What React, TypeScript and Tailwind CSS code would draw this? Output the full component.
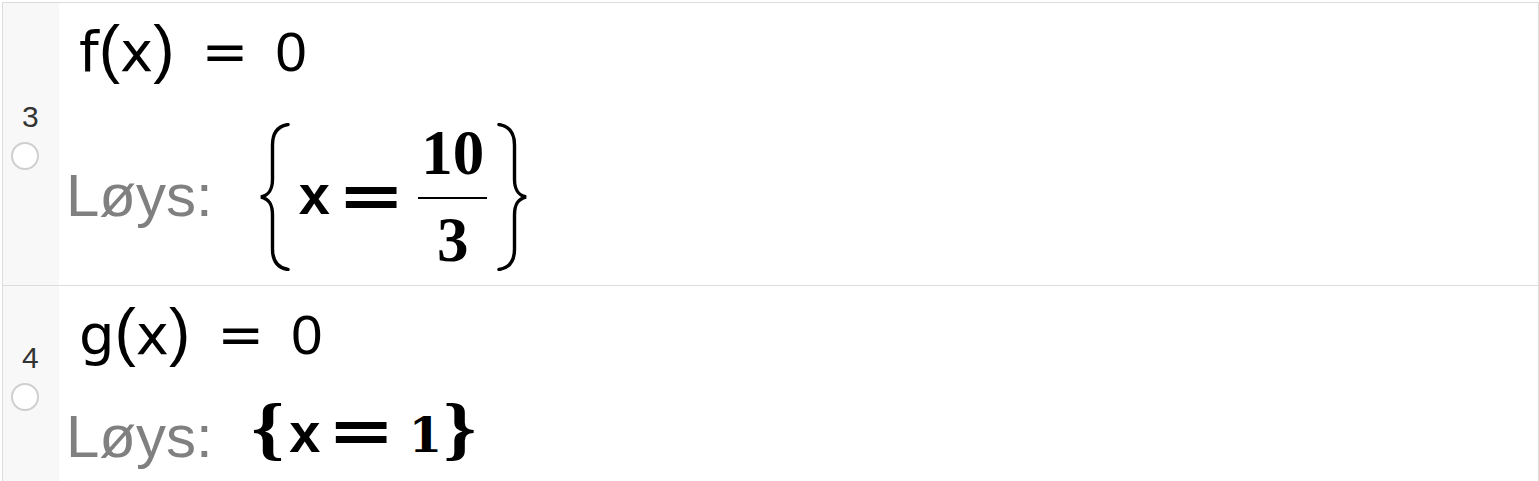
import React from 'react';

// stretched curly brace for the tall solution set
const TallBrace = ({ flip = false }: { flip?: boolean }) => (
  <svg width="34" height="148" viewBox="0 0 34 148" className={flip ? '-scale-x-100' : ''}>
    <path
      d="M30 1.5 C20 3 14.5 9 14.5 22 L14.5 56 C14.5 67 11 72 3 74 C11 76 14.5 81 14.5 92 L14.5 126 C14.5 139 20 145 30 146.5"
      fill="none"
      stroke="#000"
      strokeWidth="3.4"
      strokeLinecap="round"
    />
  </svg>
);

const Gutter = ({ num, pad }: { num: number; pad: string }) => (
  <div className={`w-[56px] shrink-0 bg-[#f8f8f8] flex flex-col ${pad}`}>
    <div className="pl-[19px] font-['Liberation_Sans',sans-serif] text-[30px] leading-[30px] text-[#333]">{num}</div>
    <div className="mt-[10px] ml-[8px] w-[28px] h-[28px] rounded-full border-2 border-[#cfcfcf] bg-white" />
  </div>
);

const Equation = ({ fn }: { fn: string }) => (
  <div className="pt-[14px] pl-[20px] h-[79px] flex items-baseline text-[56px] leading-[64px] text-black">
    <span className="font-['DejaVu_Sans',sans-serif]">{fn}</span>
    <span className="font-['Liberation_Sans',sans-serif] text-[64px]">(</span>
    <span className="font-['DejaVu_Sans',sans-serif]">x</span>
    <span className="font-['Liberation_Sans',sans-serif] text-[64px]">)</span>
    <span className="ml-[27px] font-['DejaVu_Sans',sans-serif]">=</span>
    <span className="ml-[27px] font-['Liberation_Sans',sans-serif]">0</span>
  </div>
);

const Losys = () => (
  <span className="font-['Liberation_Sans',sans-serif] text-[60px] leading-none text-[#808080]">Løys:</span>
);

const BoldX = () => (
  <span className="font-['Liberation_Sans',sans-serif] font-bold text-[56px] leading-none">x</span>
);

const BoldEq = () => (
  <span className="inline-block font-['DejaVu_Sans',sans-serif] font-bold text-[60px] leading-none scale-x-[1.35]">=</span>
);

export default function App() {
  return (
    <div className="w-[1539px] h-[481px] overflow-hidden bg-white pl-[2px] pt-[2px]">
      <div className="w-[1537px] border-t border-l border-r border-[#dcdcdc]">
        {/* row 3 */}
        <div className="h-[283px] flex border-b border-[#dcdcdc]">
          <Gutter num={3} pad="pt-[99px]" />
          <div className="flex-1 flex flex-col">
            <Equation fn="f" />
            <div className="mt-[40px] pl-[7px] flex items-center text-black">
              <span className="-translate-y-[1px]">
                <Losys />
              </span>
              <div className="ml-[45px]">
                <TallBrace />
              </div>
              <span className="ml-[7px] -translate-y-[2px]">
                <BoldX />
              </span>
              <span className="ml-[16px] -translate-y-[1px]">
                <BoldEq />
              </span>
              <div className="ml-[22px] flex flex-col items-center font-['Liberation_Serif',serif] font-bold text-[63px] leading-none">
                <span>10</span>
                <div className="mt-[12px] w-[69px] h-[2px] bg-black" />
                <span className="mt-[10px]">3</span>
              </div>
              <div className="ml-[8px]">
                <TallBrace flip />
              </div>
            </div>
          </div>
        </div>
        {/* row 4 */}
        <div className="h-[200px] flex">
          <Gutter num={4} pad="pt-[57px]" />
          <div className="flex-1 flex flex-col">
            <Equation fn="g" />
            <div className="mt-[34px] pl-[7px] flex items-baseline text-black">
              <Losys />
              <div className="ml-[41px] flex items-baseline -translate-y-[5px]">
                <span className="inline-block font-['Liberation_Serif',serif] font-bold text-[70px] leading-none scale-x-[1.2]">{'{'}</span>
                <span className="ml-[8px]">
                  <BoldX />
                </span>
                <span className="ml-[16px]">
                  <BoldEq />
                </span>
                <span className="ml-[22px] font-['DejaVu_Serif',serif] font-bold text-[48px] leading-none">1</span>
                <span className="ml-[4px] inline-block font-['Liberation_Serif',serif] font-bold text-[70px] leading-none scale-x-[1.2]">{'}'}</span>
              </div>
            </div>
          </div>
        </div>
      </div>
    </div>
  );
}
